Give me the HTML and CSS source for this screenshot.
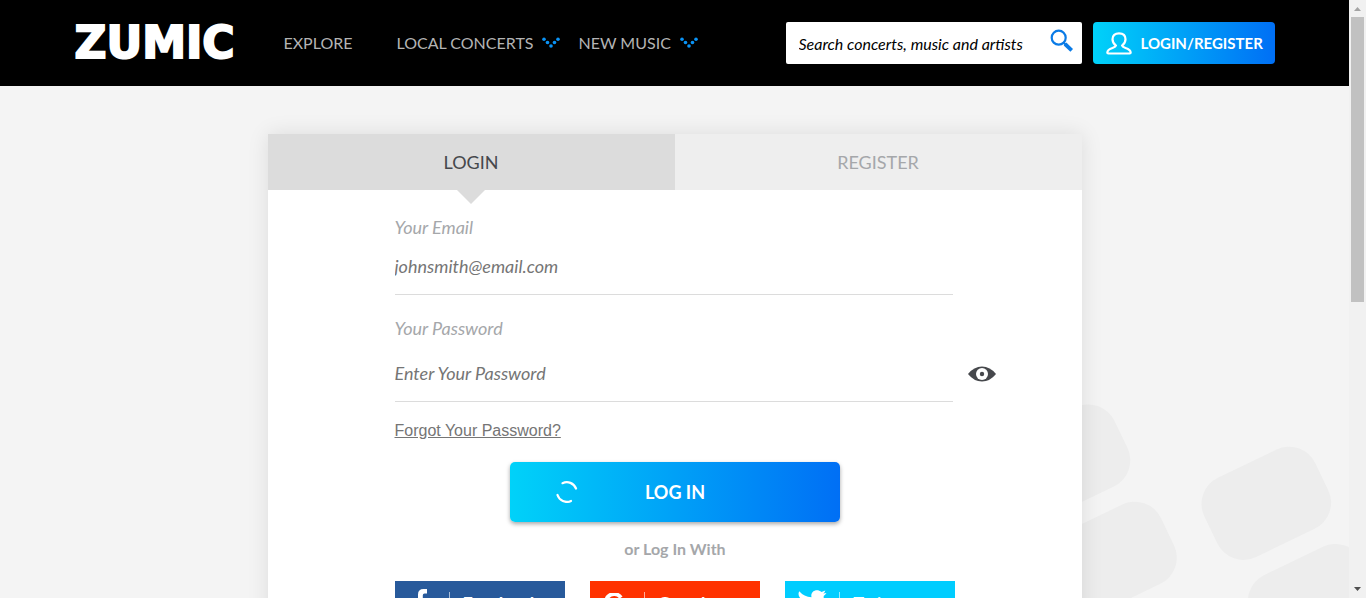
FILE: index.html
```html
<!DOCTYPE html>
<html lang="en">
<head>
<meta charset="utf-8">
<meta name="viewport" content="width=device-width, initial-scale=1">
<title>Zumic - Login</title>
<link rel="stylesheet" href="styles.css">
</head>
<body>
<div class="page">
  <svg class="backdrop" width="350" height="220" viewBox="0 0 350 220" aria-hidden="true">
    <g fill="#ededed">
      <rect x="-61.5" y="-44" width="123" height="88" rx="29" transform="translate(66.500 83) rotate(-25.7)"/>
      <rect x="-61.5" y="-44" width="123" height="88" rx="29" transform="translate(113 180.300) rotate(-25.7)"/>
      <rect x="-61.5" y="-44" width="123" height="88" rx="29" transform="translate(267.300 125.300) rotate(-25.7)"/>
      <rect x="-61.5" y="-44" width="123" height="88" rx="29" transform="translate(313.700 222.600) rotate(-25.7)"/>
    </g>
  </svg>

  <header class="header">
    <div class="header-inner">
      <a class="logo" href="#">ZUMIC</a>
      <nav class="nav">
        <a class="nav-link nav-first" href="#">EXPLORE</a>
        <a class="nav-link" href="#">LOCAL CONCERTS
          <svg class="dots" width="18" height="12" viewBox="0 0 18 12" fill="#0a93f5" aria-hidden="true"><circle cx="2" cy="2.2" r="1.8"/><circle cx="5.5" cy="5.5" r="1.8"/><circle cx="9" cy="9" r="1.8"/><circle cx="12.5" cy="5.5" r="1.8"/><circle cx="16" cy="2.2" r="1.8"/></svg></a>
        <a class="nav-link" href="#">NEW MUSIC
          <svg class="dots" width="18" height="12" viewBox="0 0 18 12" fill="#0a93f5" aria-hidden="true"><circle cx="2" cy="2.2" r="1.8"/><circle cx="5.5" cy="5.5" r="1.8"/><circle cx="9" cy="9" r="1.8"/><circle cx="12.5" cy="5.5" r="1.8"/><circle cx="16" cy="2.2" r="1.8"/></svg></a>
      </nav>
      <form class="search">
        <input class="search-input" type="search" aria-label="Search" placeholder="Search concerts, music and artists">
        <button class="search-button" type="button" aria-label="Search">
          <svg width="24" height="24" viewBox="0 0 24 24" fill="none" stroke="#0a7be6" aria-hidden="true"><circle cx="8.7" cy="8.7" r="7" stroke-width="2.2"/><path d="M13.7 13.7l2 2" stroke-width="2.2"/><path d="M15 15l6.7 6.3" stroke-width="3.8"/></svg>
        </button>
      </form>
      <a class="account" href="#">
        <svg width="26" height="23" viewBox="0 0 26 23" fill="none" stroke="#fff" stroke-width="2.200" stroke-linejoin="round" aria-hidden="true"><path d="M10 13.6C7.700 12 6.500 9.600 6.500 7.200C6.500 3.600 9 1.300 13 1.300S19.500 3.600 19.500 7.200C19.500 9.600 18.300 12 16 13.600C16.300 14.800 17.500 15.300 19.500 16C22.500 17 24.500 18 24.700 20.600Q24.700 21.500 23.700 21.500H2.300Q1.300 21.500 1.300 20.600C1.500 18 3.500 17 6.500 16C8.500 15.300 9.700 14.800 10 13.600Z"/></svg>
        LOGIN/REGISTER
      </a>
    </div>
  </header>

  <main class="card">
    <div class="tabs">
      <button class="tab tab-active" type="button">LOGIN</button>
      <button class="tab" type="button">REGISTER</button>
    </div>
    <form class="form">
      <label class="label" for="email">Your Email</label>
      <input class="field" id="email" type="email" placeholder="johnsmith@email.com">
      <label class="label label-password" for="password">Your Password</label>
      <div class="password-row">
        <input class="field field-password" id="password" type="password" placeholder="Enter Your Password">
        <button class="reveal" type="button" aria-label="Show password">
          <svg width="28" height="16" viewBox="0 0 28 16" aria-hidden="true"><path d="M0 8Q6 .5 14 .5T28 8Q22 15.500 14 15.500T0 8Z" fill="#46484c"/><circle cx="14" cy="8" r="6" fill="#fff"/><circle cx="14" cy="8" r="2.200" fill="#46484c"/></svg>
        </button>
      </div>
      <a class="forgot" href="#">Forgot Your Password?</a>
      <button class="submit" type="submit">
        <svg class="spinner" width="22" height="22" viewBox="0 0 22 22" fill="none" stroke="#fff" stroke-width="2.200" stroke-linecap="round" aria-hidden="true"><path d="M6.500 2.200A9.800 9.800 0 0 1 20 7.500M1.500 14A9.800 9.800 0 0 0 15 20"/></svg>
        LOG IN
      </button>
      <p class="divider-text">or Log In With</p>
      <div class="socials">
        <button class="social facebook" type="button">
          <span class="social-icon"><svg width="16" height="30" viewBox="0 0 16 30" fill="#fff" aria-hidden="true"><path d="M14 0V4.500H11.500Q9.800 4.500 9.800 6.200V10H14L13.400 14.500H9.800V30H5V14.500H1.500V10H5V5.500Q5 0 10.500 0Z"/></svg></span>
          <span class="social-name">Facebook</span>
        </button>
        <button class="social google" type="button">
          <span class="social-icon"><svg width="22" height="22" viewBox="0 0 20 20" fill="none" stroke="#fff" stroke-width="3.500" aria-hidden="true"><path d="M14.500 4.200A7.500 7.500 0 1 0 15.500 10.500H9"/></svg></span>
          <span class="social-name">Google</span>
        </button>
        <button class="social twitter" type="button">
          <span class="social-icon"><svg width="30" height="28" viewBox="0 0 30 24" preserveAspectRatio="xMidYMin" fill="#fff" aria-hidden="true"><path d="M29.500 3Q28.500 4.700 26.700 6C27 15 20 23.500 10 23.500Q4.500 23.500 .5 21Q5.500 21.300 9 18.500Q5 18 3.700 14.300H6.200Q1.800 12.700 1.500 8.200L4 8.900Q.2 5.500 2.200 1.200Q7 6.800 14.500 7.300C13 1 20-2 24.500 2L28.300 .5Q27.800 2.300 26.300 3.600Z"/></svg></span>
          <span class="social-name">Twitter</span>
        </button>
      </div>
    </form>
  </main>
</div>
<div class="scrollbar" aria-hidden="true">
  <svg width="17" height="17" viewBox="0 0 17 17"><path d="M5 11H12L8.500 7Z" fill="#a3a3a3"/></svg>
  <div class="track"><div class="thumb"></div></div>
  <svg width="17" height="17" viewBox="0 0 17 17"><path d="M5 6H12L8.500 10Z" fill="#505050"/></svg>
</div>
</body>
</html>
```
FILE: styles.css
```css
* { box-sizing: border-box; }

body {
  display: flex;
  height: 100vh;
  margin: 0;
  overflow: hidden;
  background: #f4f4f4;
  font-family: Lato, sans-serif;
  font-size: 16px;
}

button, input { font-family: inherit; margin: 0; }
button { border: 0; padding: 0; background: none; cursor: pointer; }
a { text-decoration: none; }
svg { display: block; }

.page {
  position: relative;
  flex: 1;
  min-width: 0;
  overflow: hidden;
}

.backdrop { position: absolute; right: 0; bottom: 0; }

/* Header */
.header { background: #000; padding: 22px 16px; }

.header-inner {
  display: flex;
  align-items: center;
  max-width: 1200px;
  height: 42px;
  margin: 0 auto;
}

.logo {
  width: 180px;
  flex: none;
  color: #fff;
  font-family: "DejaVu Sans", sans-serif;
  font-size: 44px;
  font-weight: bold;
  line-height: 42px;
  -webkit-text-stroke: 2px #fff;
}

.nav { display: flex; flex: 1; margin-left: 29px; }

.nav-link {
  display: flex;
  align-items: center;
  gap: 9px;
  margin-right: 18px;
  color: #b4b4b4;
  line-height: 20px;
  white-space: nowrap;
}

.nav-first { margin-right: 44px; }

.search {
  display: flex;
  align-items: center;
  flex: none;
  width: 296px;
  height: 42px;
  padding: 0 8px 0 13px;
  border-radius: 2px;
  background: #fff;
}

.search-input {
  flex: 1;
  min-width: 0;
  height: 42px;
  padding: 0;
  border: 0;
  outline: 0;
  background: none;
  font-size: 16px;
  font-style: italic;
}

.search-input::placeholder { color: #000; }
.search-button { padding-bottom: 4px; }

.account {
  display: flex;
  align-items: center;
  flex: none;
  gap: 9px;
  width: 182px;
  height: 42px;
  margin-left: 11px;
  padding-left: 13px;
  border-radius: 4px;
  background: linear-gradient(90deg, #00d2f9, #006ff5);
  color: #fff;
  font-size: 15px;
  font-weight: bold;
  white-space: nowrap;
}

/* Card */
.card {
  position: relative;
  max-width: 814px;
  margin: 48px auto;
  background: #fff;
  box-shadow: 0 0 20px rgba(0, 0, 0, .1);
}

.tabs { display: grid; grid-template-columns: 1fr 1fr; }

.tab {
  height: 56px;
  background: #eee;
  color: #a5a7aa;
  font-size: 18px;
}

.tab-active {
  position: relative;
  background: #dcdcdc;
  color: #46484c;
}

.tab-active::after {
  content: "";
  position: absolute;
  top: 100%;
  left: 50%;
  margin-left: -14px;
  border: 14px solid transparent;
  border-top-color: #dcdcdc;
  border-bottom: 0;
}

.form { padding: 25px 126px 60px 127px; }

.label {
  display: block;
  color: #a5a7aa;
  font-size: 18px;
  font-style: italic;
  line-height: 24px;
}

.label-password { margin-top: 21px; }

.field {
  display: block;
  width: 558px;
  max-width: 100%;
  height: 56px;
  padding: 0 0 1px;
  border: 0;
  border-bottom: 1px solid #dcdcdc;
  outline: 0;
  background: none;
  color: #757575;
  font-size: 18px;
  font-style: italic;
}

.field::placeholder { color: #757575; }
.field-password { height: 62px; padding: 5px 0 0; flex: none; }

.password-row { display: flex; align-items: center; gap: 15px; }
.reveal { padding-top: 6px; }

.forgot {
  display: block;
  width: max-content;
  margin-top: 19px;
  color: #757575;
  font-family: "Liberation Sans", Arial, sans-serif;
  line-height: 20px;
  text-decoration: underline;
}

.submit {
  position: relative;
  display: block;
  width: 330px;
  height: 60px;
  margin: 21px auto 0;
  border-radius: 5px;
  background: linear-gradient(90deg, #00d2f9, #006ff5);
  box-shadow: 0 2px 4px rgba(0, 0, 0, .35);
  color: #fff;
  font-size: 18px;
  font-weight: bold;
}

.spinner { position: absolute; left: 46px; top: 19px; }

.divider-text {
  margin: 17px 0 22px;
  color: #a5a7aa;
  font-weight: bold;
  line-height: 20px;
  text-align: center;
}

.socials { display: grid; grid-template-columns: repeat(3, 1fr); gap: 25px; }

.social {
  display: flex;
  align-items: center;
  height: 46px;
  color: #fff;
  font-size: 18px;
  font-weight: bold;
}

.social-icon {
  display: flex;
  align-items: center;
  justify-content: center;
  width: 55px;
  height: 24px;
  padding-right: 2px;
  border-right: 1px solid rgba(255, 255, 255, .6);
}

.social-name { padding-left: 13px; }
.facebook { background: #285a9b; }
.google { background: #ff3200; }
.twitter { background: #00cdff; }
.twitter .social-icon { padding: 0; }

/* Scrollbar */
.scrollbar {
  display: flex;
  flex-direction: column;
  width: 17px;
  background: #f1f1f1;
}

.track { flex: 1; padding: 0 2px; }
.thumb { height: 50.5%; background: #c1c1c1; }
```
